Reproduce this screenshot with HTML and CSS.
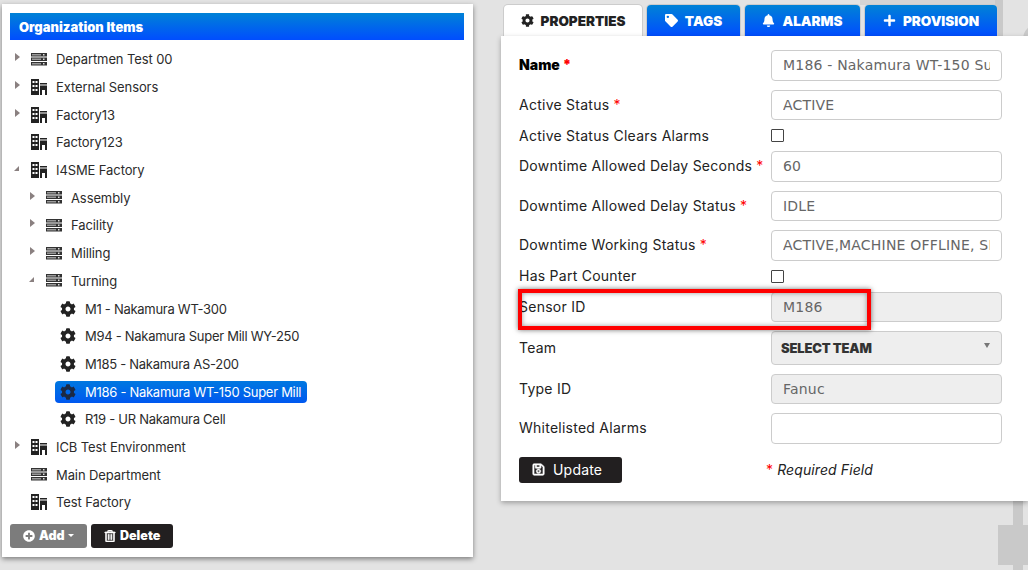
FILE: index.html
```html
<!DOCTYPE html>
<html lang="en">
<head>
  <meta charset="UTF-8"/>
  <title>Organization Items</title>
  <link rel="stylesheet" href="styles.css">
</head>
<body>
  <svg class="sprite" aria-hidden="true">
    <symbol id="i-cog" viewBox="0 0 512 512"><path d="M487.4 315.7l-42.6-24.6c4.3-23.2 4.3-47 0-70.2l42.6-24.6c4.9-2.8 7.1-8.6 5.5-14-11.1-35.6-30-67.8-54.7-94.6-3.8-4.1-10-5.1-14.8-2.3L380.8 110c-17.9-15.4-38.5-27.3-60.8-35.1V25.8c0-5.6-3.9-10.5-9.4-11.7-36.7-8.2-74.3-7.8-109.2 0-5.5 1.2-9.4 6.1-9.4 11.7V75c-22.2 7.9-42.8 19.8-60.8 35.1L88.7 85.5c-4.9-2.8-11-1.9-14.8 2.3-24.7 26.7-43.6 58.9-54.7 94.6-1.7 5.4.6 11.2 5.5 14L67.3 221c-4.3 23.2-4.3 47 0 70.2l-42.6 24.6c-4.9 2.8-7.1 8.6-5.5 14 11.1 35.6 30 67.8 54.7 94.6 3.8 4.1 10 5.1 14.8 2.3l42.6-24.6c17.9 15.4 38.5 27.3 60.8 35.1v49.2c0 5.6 3.9 10.5 9.4 11.7 36.7 8.2 74.3 7.8 109.2 0 5.5-1.2 9.4-6.1 9.4-11.7v-49.2c22.2-7.9 42.8-19.8 60.8-35.1l42.6 24.6c4.9 2.8 11 1.9 14.8-2.3 24.7-26.7 43.6-58.9 54.7-94.6 1.5-5.5-.7-11.3-5.6-14.1zM256 336c-44.1 0-80-35.9-80-80s35.9-80 80-80 80 35.9 80 80-35.9 80-80 80z"/></symbol>
    <symbol id="i-building" viewBox="0 0 16 16"><path fill-rule="evenodd" d="M0 0h8v16H0zM1.5 2v2h2V2zM4.5 2v2h2V2zM1.5 6v2h2V6zM4.5 6v2h2V6zM1.5 10v2h2v-2zM4.500 10v2h2v-2z"/><path d="M9 4h7v1.5H9zM9 6.5h7V16h-2v-5h-3v5H9z"/></symbol>
    <symbol id="i-server" viewBox="0 0 16 13"><path fill="#333" d="M0 0h16v3.5H0zM0 4.500h16V8H0zM0 9h16v3.500H0z"/><path fill="#999" d="M1 1h9v1.5H1zM1 5.500h9V7H1zM1 10h9v1.5H1z"/><path fill="#ddd" d="M12 1h1.5v1.5H12zM12 5.500h1.5V7H12zM12 10h1.5v1.5H12z"/></symbol>
    <symbol id="i-tag" viewBox="0 0 512 512"><path d="M0 252.100V48C0 21.500 21.500 0 48 0h204.100a48 48 0 0 1 33.900 14.100l211.900 211.900c18.700 18.700 18.700 49.100 0 67.900L293.800 497.900c-18.700 18.700-49.100 18.700-67.900 0L14.100 286.100A48 48 0 0 1 0 252.100zM112 64a48 48 0 1 0 0 96 48 48 0 0 0 0-96z"/></symbol>
    <symbol id="i-bell" viewBox="0 0 448 512"><path d="M224 512c35.300 0 64-28.700 64-64H160c0 35.300 28.700 64 64 64zm215.400-149.700c-19.300-20.800-55.500-52-55.500-154.300 0-77.700-54.500-139.900-127.900-155.200V32c0-17.700-14.300-32-32-32s-32 14.300-32 32v20.800C118.600 68.100 64.100 130.300 64.100 208c0 102.300-36.200 133.500-55.500 154.300-6 6.400-8.700 14.100-8.600 21.700.1 16.400 13 32 32.100 32h383.800c19.100 0 32-15.600 32.100-32 .1-7.600-2.600-15.300-8.600-21.700z"/></symbol>
    <symbol id="i-plus" viewBox="0 0 448 512"><path d="M416 208H272V64c0-17.700-14.300-32-32-32h-32c-17.700 0-32 14.300-32 32v144H32c-17.700 0-32 14.300-32 32v32c0 17.700 14.300 32 32 32h144v144c0 17.700 14.300 32 32 32h32c17.700 0 32-14.300 32-32V304h144c17.700 0 32-14.300 32-32v-32c0-17.700-14.300-32-32-32z"/></symbol>
    <symbol id="i-plus-circle" viewBox="0 0 512 512"><path d="M256 8C119 8 8 119 8 256s111 248 248 248 248-111 248-248S393 8 256 8zm144 276c0 6.600-5.400 12-12 12h-92v92c0 6.600-5.400 12-12 12h-56c-6.600 0-12-5.400-12-12v-92h-92c-6.600 0-12-5.400-12-12v-56c0-6.600 5.400-12 12-12h92v-92c0-6.600 5.400-12 12-12h56c6.600 0 12 5.400 12 12v92h92c6.600 0 12 5.400 12 12z"/></symbol>
    <symbol id="i-trash" viewBox="0 0 448 512"><path stroke="#fff" stroke-width="24" d="M268 416h24a12 12 0 0 0 12-12V188a12 12 0 0 0-12-12h-24a12 12 0 0 0-12 12v216a12 12 0 0 0 12 12zM432 80h-82.400l-34-56.700A48 48 0 0 0 274.400 0H173.600a48 48 0 0 0-41.200 23.300L98.400 80H16A16 16 0 0 0 0 96v16a16 16 0 0 0 16 16h16v336a48 48 0 0 0 48 48h288a48 48 0 0 0 48-48V128h16a16 16 0 0 0 16-16V96a16 16 0 0 0-16-16zM171.800 50.900A6 6 0 0 1 177 48h94a6 6 0 0 1 5.200 2.900L293.600 80H154.400zM368 464H80V128h288zm-212-48h24a12 12 0 0 0 12-12V188a12 12 0 0 0-12-12h-24a12 12 0 0 0-12 12v216a12 12 0 0 0 12 12z"/></symbol>
    <symbol id="i-save" viewBox="0 0 448 512"><path stroke="#fff" stroke-width="24" d="M433.900 129.900l-83.900-83.900A48 48 0 0 0 316.100 32H48C21.500 32 0 53.500 0 80v352c0 26.500 21.500 48 48 48h352c26.500 0 48-21.500 48-48V163.900a48 48 0 0 0-14.100-34zM272 80v80H144V80h128zm122 352H54a6 6 0 0 1-6-6V86a6 6 0 0 1 6-6h42v104c0 13.300 10.700 24 24 24h176c13.300 0 24-10.700 24-24V83.900l78.200 78.200a6 6 0 0 1 1.800 4.200V426a6 6 0 0 1-6 6zM224 232c-48.500 0-88 39.500-88 88s39.500 88 88 88 88-39.500 88-88-39.500-88-88-88zm0 128c-22.100 0-40-17.900-40-40s17.900-40 40-40 40 17.900 40 40-17.900 40-40 40z"/></symbol>
  </svg>

  <!-- gray shapes of the diagram behind the panels -->
  <div class="backdrop" aria-hidden="true">
    <div class="bg-topbar"></div>
    <div class="bg-column"></div>
    <div class="bg-round"></div>
    <div class="bg-stem"></div>
    <div class="bg-block"></div>
  </div>

  <div class="page">
    <aside class="tree-panel">
      <h2 class="panel-title">Organization Items</h2>
      <ul class="tree">
        <li class="node"><span class="caret"></span><svg class="ico-server"><use href="#i-server"/></svg><span>Departmen Test 00</span></li>
        <li class="node"><span class="caret"></span><svg class="ico-building"><use href="#i-building"/></svg><span>External Sensors</span></li>
        <li class="node"><span class="caret"></span><svg class="ico-building"><use href="#i-building"/></svg><span>Factory13</span></li>
        <li class="node"><span class="caret none"></span><svg class="ico-building"><use href="#i-building"/></svg><span>Factory123</span></li>
        <li class="node"><span class="caret open"></span><svg class="ico-building"><use href="#i-building"/></svg><span>I4SME Factory</span></li>
        <li class="node lvl1"><span class="caret"></span><svg class="ico-server"><use href="#i-server"/></svg><span>Assembly</span></li>
        <li class="node lvl1"><span class="caret"></span><svg class="ico-server"><use href="#i-server"/></svg><span>Facility</span></li>
        <li class="node lvl1"><span class="caret"></span><svg class="ico-server"><use href="#i-server"/></svg><span>Milling</span></li>
        <li class="node lvl1"><span class="caret open"></span><svg class="ico-server"><use href="#i-server"/></svg><span>Turning</span></li>
        <li class="node lvl2"><a class="leaf"><svg class="ico-cog"><use href="#i-cog"/></svg><span>M1 - Nakamura WT-300</span></a></li>
        <li class="node lvl2"><a class="leaf"><svg class="ico-cog"><use href="#i-cog"/></svg><span>M94 - Nakamura Super Mill WY-250</span></a></li>
        <li class="node lvl2"><a class="leaf"><svg class="ico-cog"><use href="#i-cog"/></svg><span>M185 - Nakamura AS-200</span></a></li>
        <li class="node lvl2"><a class="leaf selected"><svg class="ico-cog"><use href="#i-cog"/></svg><span>M186 - Nakamura WT-150 Super Mill</span></a></li>
        <li class="node lvl2"><a class="leaf"><svg class="ico-cog"><use href="#i-cog"/></svg><span>R19 - UR Nakamura Cell</span></a></li>
        <li class="node"><span class="caret"></span><svg class="ico-building"><use href="#i-building"/></svg><span>ICB Test Environment</span></li>
        <li class="node"><span class="caret none"></span><svg class="ico-server"><use href="#i-server"/></svg><span>Main Department</span></li>
        <li class="node"><span class="caret none"></span><svg class="ico-building"><use href="#i-building"/></svg><span>Test Factory</span></li>
      </ul>
      <div class="tree-actions">
        <button class="btn btn-add"><svg class="btn-ico"><use href="#i-plus-circle"/></svg>Add<span class="mini-caret"></span></button>
        <button class="btn btn-delete"><svg class="btn-ico"><use href="#i-trash"/></svg>Delete</button>
      </div>
    </aside>

    <main class="detail">
      <nav class="tabs">
        <a class="tab active tab-props"><svg class="tab-ico"><use href="#i-cog"/></svg>PROPERTIES</a>
        <a class="tab tab-tags"><svg class="tab-ico"><use href="#i-tag"/></svg>TAGS</a>
        <a class="tab tab-alarms"><svg class="tab-ico"><use href="#i-bell"/></svg>ALARMS</a>
        <a class="tab tab-provision"><svg class="tab-ico"><use href="#i-plus"/></svg>PROVISION</a>
      </nav>
      <section class="form-panel">
        <form class="form-grid">
          <label class="strong">Name <em>*</em></label>
          <input type="text" value="M186 - Nakamura WT-150 Super Mill">
          <label>Active Status <em>*</em></label>
          <input type="text" value="ACTIVE">
          <label class="check-label">Active Status Clears Alarms</label>
          <span class="check"></span>
          <label>Downtime Allowed Delay Seconds <em>*</em></label>
          <input type="text" value="60">
          <label>Downtime Allowed Delay Status <em>*</em></label>
          <input type="text" value="IDLE">
          <label>Downtime Working Status <em>*</em></label>
          <input type="text" value="ACTIVE,MACHINE OFFLINE, SETUP">
          <label class="check-label">Has Part Counter</label>
          <span class="check"></span>
          <label>Sensor ID</label>
          <input type="text" value="M186" disabled>
          <label>Team</label>
          <div class="select-wrap"><select disabled><option>SELECT TEAM</option></select></div>
          <label>Type ID</label>
          <input type="text" value="Fanuc" disabled>
          <label>Whitelisted Alarms</label>
          <input type="text">
          <button type="button" class="btn-update"><svg class="update-ico"><use href="#i-save"/></svg>Update</button>
          <p class="required"><em>*</em> <i>Required Field</i></p>
        </form>
        <div class="highlight"></div>
      </section>
    </main>
  </div>
</body>
</html>
```

FILE: styles.css
```css
* { box-sizing:border-box; }
html,body { height:100%; }
body { margin:0; background:#e3e3e3; color:#222; font-family:'Inter',sans-serif; font-size:13px; overflow:hidden; position:relative; }
.sprite { display:none; }

.backdrop div { position:absolute; background:#c9c9c9; }
.bg-topbar { left:860px; top:0; width:135px; height:5px; background:#d4d4d4 !important; }
.bg-column { left:995px; top:0; width:8px; height:40px; }
.bg-round { left:1023px; top:24px; width:30px; height:30px; border-radius:50%; }
.bg-stem { left:1013px; top:500px; width:10px; height:70px; }
.bg-block { left:998px; top:525px; width:30px; height:40px; }

.page { display:flex; align-items:flex-start; position:relative; }

/* left tree */
.tree-panel { width:471px; height:553px; margin:4px 0 0 2px; padding:9px 9px 0 8px; background:#fff; box-shadow:0 2px 5px rgba(0,0,0,.45); }
.panel-title { margin:0; height:27px; line-height:28px; padding-left:9px; color:#fff; font-size:13px; font-weight:900; letter-spacing:0; background:linear-gradient(#0082d6,#004dff); }
.tree { list-style:none; margin:5.5px 0 0; padding:0; }
.node { display:flex; align-items:center; height:27.7px; padding-left:5px; color:#2b2b2b; letter-spacing:-.1px; white-space:nowrap; }
.lvl1 { padding-left:20px; }
.lvl2 { padding-left:45px; letter-spacing:-.28px; }
.caret { width:16px; height:8px; flex:none; position:relative; top:-2px; }
.caret::before { content:""; display:block; border-left:5px solid #8a8080; border-top:4px solid transparent; border-bottom:4px solid transparent; width:0; height:0; }
.caret.open::before { border-left:5px solid transparent; border-top:0; border-bottom:5px solid #8a8080; margin-left:-1px; margin-top:2px; }
.caret.none::before { display:none; }
.ico-server { width:16px; height:13px; margin-right:9px; flex:none; }
.ico-building { width:16px; height:16px; margin-right:9px; flex:none; fill:#222; }
.ico-cog { width:16px; height:16px; margin-right:9px; flex:none; fill:#222; }
.leaf { display:inline-flex; align-items:center; height:22px; padding:0 6px 0 5px; border-radius:4px; }
.selected { background:linear-gradient(#0078e0,#0058f0); color:#fff; }
.selected .ico-cog { fill:#1c2a44; }

.tree-actions { display:flex; gap:4px; margin-top:7.5px; }
.btn { display:inline-flex; align-items:center; height:24px; border:none; border-radius:3px; color:#fff; font:900 12.5px 'Inter',sans-serif; padding:0 0 0 13px; }
.btn-add { width:77px; background:#7c7c7c; }
.btn-delete { width:82px; background:#221f20; }
.btn-ico { width:12px; height:12px; margin-right:4px; fill:#fff; }
.mini-caret { margin-left:3px; border-top:3px solid #fff; border-left:3px solid transparent; border-right:3px solid transparent; }

/* right side */
.detail { margin-left:28px; width:527px; }
.tabs { display:flex; gap:5px; margin:5px 0 0 3px; height:31px; }
.tab { display:flex; align-items:center; justify-content:center; height:31px; border-radius:4px 4px 0 0; color:#fff; font-size:13.5px; font-weight:900; background:linear-gradient(#0082d6,#004dff); box-shadow:0 0 0 1px #ccc; }
.tab.active { background:#fff; color:#222; }
.tab-props { width:138px; }
.tab-tags { width:93px; }
.tab-alarms { width:115px; }
.tab-provision { width:132px; }
.tab-ico { width:13px; height:13px; margin-right:7px; fill:currentColor; }

.form-panel { position:relative; height:465px; background:#fff; box-shadow:0 2px 5px rgba(0,0,0,.3); padding:14px 26px 0 18px; }
.form-grid { display:grid; grid-template-columns:252px 231px; row-gap:9px; align-items:center; }
label { font-size:14px; letter-spacing:.25px; white-space:nowrap; position:relative; top:-.5px; }
label em, .required em { color:#f00; font-style:normal; }
.strong { font-weight:900; color:#000; letter-spacing:0; top:-1px; }
.check-label { line-height:13px; }
input, select { width:100%; height:30.5px; border:1px solid #ccc; border-radius:4px; background:#fff; color:#666; padding:0 11px; font-family:'DejaVu Sans',sans-serif; font-size:14px; letter-spacing:.2px; outline:none; }
input:disabled { background:#eee; color:#666; }
.check { display:block; width:13px; height:13px; border:1px solid #444; border-radius:1px; }
.select-wrap { position:relative; }
select { display:block; height:33.5px; appearance:none; background:#eee; opacity:1; padding:0 9px; color:#333; font-family:'Inter',sans-serif; font-size:13px; font-weight:900; letter-spacing:-.2px; }
.select-wrap::after { content:""; position:absolute; right:12px; top:12px; border-top:5px solid #777; border-left:3px solid transparent; border-right:3px solid transparent; }
.btn-update { display:inline-flex; align-items:center; width:103px; height:26px; margin-top:4px; border:none; border-radius:3px; background:#221f20; color:#fff; padding:0 0 0 13px; font:14px 'Inter',sans-serif; letter-spacing:.2px; }
.update-ico { width:13px; height:13px; margin-right:8px; fill:#fff; }
.required { margin:4px 0 0 -5px; color:#222; font-size:14px; letter-spacing:.1px; }

.highlight { position:absolute; left:17px; top:253px; width:353px; height:41px; border:4px solid #f00; box-shadow:0 0 5px rgba(0,0,0,.55), inset 0 0 5px rgba(0,0,0,.4); }
```
